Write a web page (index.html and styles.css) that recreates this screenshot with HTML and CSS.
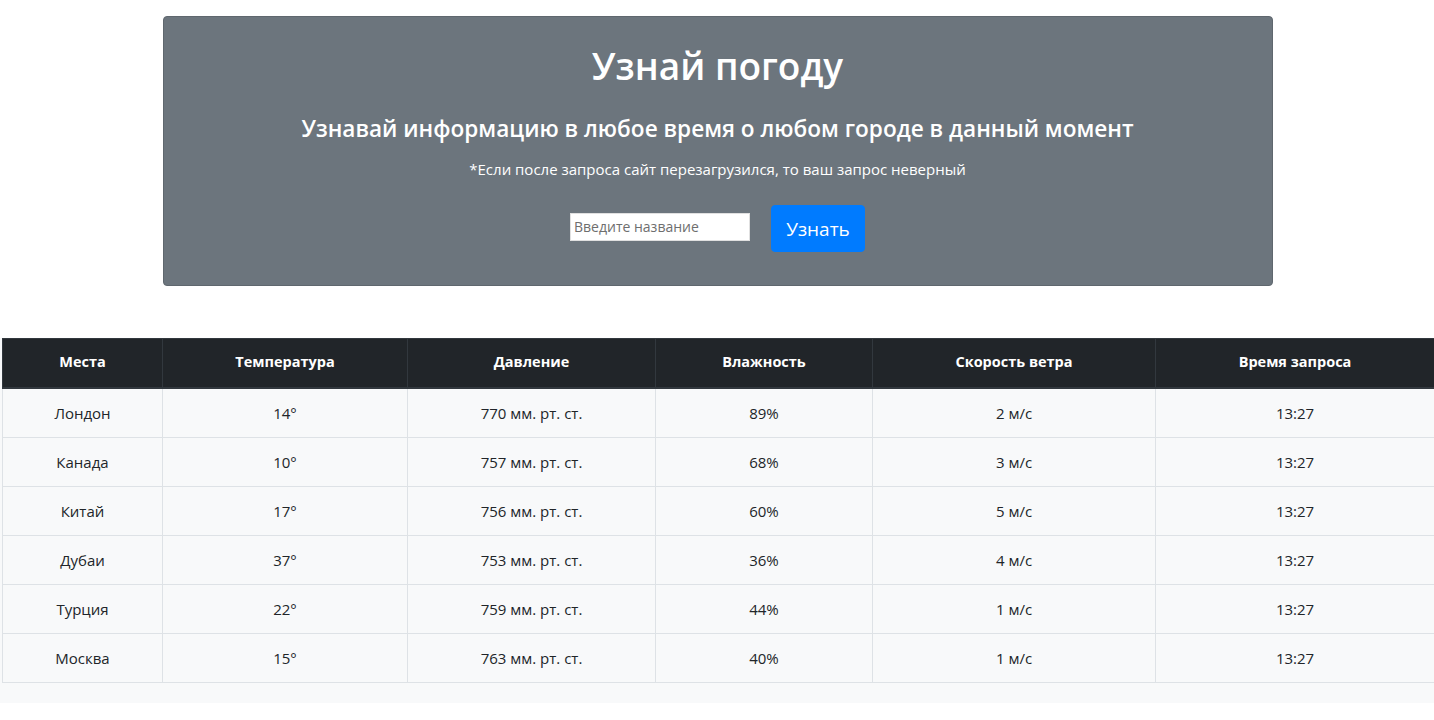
FILE: index.html
```html
<!DOCTYPE html>
<html lang="ru">
<head>
<meta charset="utf-8">
<title>Узнай погоду</title>
<link rel="stylesheet" href="styles.css">
</head>
<body>
<div class="container">
  <div class="hero">
    <h1 class="hero-title">Узнай погоду</h1>
    <h3 class="hero-sub">Узнавай информацию в любое время о любом городе в данный момент</h3>
    <p class="hero-note">*Если после запроса сайт перезагрузился, то ваш запрос неверный</p>
    <form class="hero-form">
      <input class="city-input" type="text" placeholder="Введите название">
      <button class="btn-go" type="button">Узнать</button>
    </form>
  </div>
</div>
<div class="table-wrap">
  <table class="weather">
    <colgroup>
      <col class="c1"><col class="c2"><col class="c3"><col class="c4"><col class="c5"><col class="c6">
    </colgroup>
    <thead>
      <tr><th>Места</th><th>Температура</th><th>Давление</th><th>Влажность</th><th>Скорость ветра</th><th>Время запроса</th></tr>
    </thead>
    <tbody>
      <tr><td>Лондон</td><td>14°</td><td>770 мм. рт. ст.</td><td>89%</td><td>2 м/с</td><td>13:27</td></tr>
      <tr><td>Канада</td><td>10°</td><td>757 мм. рт. ст.</td><td>68%</td><td>3 м/с</td><td>13:27</td></tr>
      <tr><td>Китай</td><td>17°</td><td>756 мм. рт. ст.</td><td>60%</td><td>5 м/с</td><td>13:27</td></tr>
      <tr><td>Дубаи</td><td>37°</td><td>753 мм. рт. ст.</td><td>36%</td><td>4 м/с</td><td>13:27</td></tr>
      <tr><td>Турция</td><td>22°</td><td>759 мм. рт. ст.</td><td>44%</td><td>1 м/с</td><td>13:27</td></tr>
      <tr><td>Москва</td><td>15°</td><td>763 мм. рт. ст.</td><td>40%</td><td>1 м/с</td><td>13:27</td></tr>
    </tbody>
  </table>
</div>
</body>
</html>
```

FILE: styles.css
```css
* { box-sizing: border-box; }
html, body { margin: 0; padding: 0; background: #fff; }
body {
  font-family: "Open Sans", "Noto Sans", sans-serif;
  font-size: 15px;
  color: #212529;
}
.container {
  width: 1111px;
  margin: 16px auto 0;
  padding-left: 1px;
}
.hero {
  background: #6c757d;
  border: 1px solid #5f676e;
  border-radius: 4px;
  color: #fff;
  text-align: center;
  padding: 25px 20px 32px;
  height: 270px;
}
.hero-title {
  margin: 0;
  font-size: 37px;
  font-weight: 600;
  line-height: 48px;
}
.hero-sub {
  margin: 24px 0 0;
  font-size: 22.6px;
  font-weight: 600;
  line-height: 29px;
}
.hero-note {
  margin: 14px 0 0;
  font-size: 15px;
  line-height: 24px;
}
.hero-form {
  margin: 24px 0 0;
  display: flex;
  justify-content: center;
  align-items: center;
  gap: 21px;
}
.city-input {
  width: 180px;
  height: 28px;
  border: 1px solid #e0e0e0;
  padding: 2px 3px;
  font-family: inherit;
  font-size: 14px;
  color: #212529;
  outline: none;
  margin-top: -4px;
}
.city-input::placeholder { color: #6e6e6e; }
.btn-go {
  width: 94px;
  height: 47px;
  background: #007bff;
  border: 1px solid #007bff;
  border-radius: 4px;
  color: #fff;
  font-family: inherit;
  font-size: 19px;
  line-height: 28px;
  padding: 6px 12px;
}
.table-wrap {
  margin-top: 52px;
  background: #f8f9fa;
  padding: 0 0 20px 2px;
}
.weather {
  width: 1432px;
  border-collapse: collapse;
  table-layout: fixed;
  text-align: center;
}
.c1 { width: 160px; }
.c2 { width: 245px; }
.c3 { width: 248px; }
.c4 { width: 217px; }
.c5 { width: 283px; }
.c6 { width: 279px; }
.weather th, .weather td {
  padding: 12px;
  line-height: 24px;
  vertical-align: top;
}
.weather th {
  background: #212529;
  color: #fff;
  font-weight: 700;
  font-size: 14.5px;
  border: 1px solid #32383e;
  border-bottom: 2px solid #32383e;
  padding: 11px 12px 12px;
  height: 49px;
}
.weather td {
  background: #f8f9fa;
  border: 1px solid #dee2e6;
  height: 49px;
}
```
